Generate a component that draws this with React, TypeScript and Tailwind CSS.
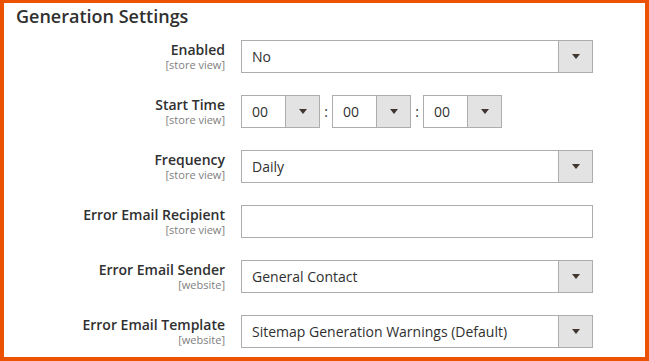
const rows: { label: string; scope: string; kind: "select" | "time" | "input"; value?: string }[] = [
  { label: "Enabled", scope: "[store view]", kind: "select", value: "No" },
  { label: "Start Time", scope: "[store view]", kind: "time" },
  { label: "Frequency", scope: "[store view]", kind: "select", value: "Daily" },
  { label: "Error Email Recipient", scope: "[store view]", kind: "input" },
  { label: "Error Email Sender", scope: "[website]", kind: "select", value: "General Contact" },
  { label: "Error Email Template", scope: "[website]", kind: "select", value: "Sitemap Generation Warnings (Default)" },
];

function Arrow() {
  return (
    <div className="w-[34px] h-full shrink-0 bg-[#e3e3e3] border-l border-[#adadad] flex items-center justify-center">
      <span className="block w-0 h-0 border-x-[4px] border-t-[5px] border-x-transparent border-t-[#41362f]" />
    </div>
  );
}

function Select({ value, className }: { value: string; className: string }) {
  return (
    <div className={`h-[33px] flex border border-[#adadad] bg-white ${className}`}>
      <div className="flex-1 flex items-center pl-[10px] text-[14px] leading-[19px] text-[#303030] whitespace-nowrap overflow-hidden">
        {value}
      </div>
      <Arrow />
    </div>
  );
}

function TimeField() {
  return (
    <div className="flex items-center">
      <Select value="00" className="w-[79px]" />
      <span className="w-[12px] text-center text-[14px] text-[#303030]">:</span>
      <Select value="00" className="w-[79px]" />
      <span className="w-[12px] text-center text-[14px] text-[#303030]">:</span>
      <Select value="00" className="w-[79px]" />
    </div>
  );
}

export default function App() {
  return (
    <div className="w-[649px] h-[361px] bg-white border-solid border-[#eb5202] border-t-[3px] border-x-4 border-b-4 font-['Open_Sans',sans-serif] overflow-hidden">
      <h2 className="pl-[12px] pt-[1px] text-[18px] font-semibold leading-[25px] text-[#303030]">Generation Settings</h2>
      <div className="mt-[11px] flex flex-col gap-[22px]">
        {rows.map((r) => (
          <div key={r.label} className="flex items-start">
            <div className="w-[221px] text-right">
              <div className="text-[14px] font-semibold leading-[19px] text-[#303030]">{r.label}</div>
              <div className="text-[11px] leading-[12px] text-[#808080]">{r.scope}</div>
            </div>
            <div className="ml-[16px]">
              {r.kind === "select" && <Select value={r.value ?? ""} className="w-[352px]" />}
              {r.kind === "time" && <TimeField />}
              {r.kind === "input" && <div className="w-[352px] h-[33px] border border-[#adadad] bg-white" />}
            </div>
          </div>
        ))}
      </div>
    </div>
  );
}
